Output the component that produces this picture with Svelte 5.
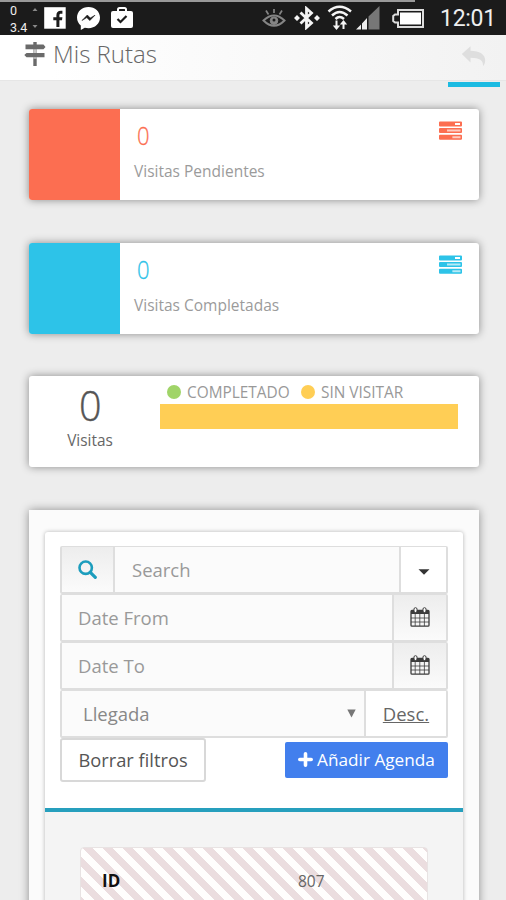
<script>
  const stats = [
    { label: 'Visitas Pendientes', value: 0, tone: 'coral' },
    { label: 'Visitas Completadas', value: 0, tone: 'sky' }
  ];
  const dates = ['Date From', 'Date To'];
</script>

<div class="screen">
  <div class="status">
    <div class="progress"></div>
    <div class="net"><span>0</span><span>3.4</span></div>
    <svg class="arrows" width="6" height="24" viewBox="0 0 6 24"><path d="M3 2 5.500 5H.5zM3 22 5.500 19H.5z" fill="#888" /></svg>
    <svg class="fb" width="22" height="22" viewBox="0 0 22 22">
      <rect width="21.500" height="21.500" x=".2" y=".2" fill="#fff" />
      <path d="M12.400 20v-6.700H9.300v-3h3.100V8.300c0-3 1.500-4.500 4.500-4.500h1.500v3h-1.500c-1.200 0-1.500.6-1.500 1.700v1.800h3l-.4 3h-2.600V20z" fill="#1b1b1b" />
    </svg>
    <svg class="msg" width="25" height="25" viewBox="0 0 25 25">
      <path d="M12.500 1C6 1 1 5.600 1 11.600c0 3.300 1.500 6.100 3.800 8V24l4-2.200c1.200.3 2.400.5 3.700.5 6.500 0 11.500-4.700 11.500-10.700S19 1 12.500 1z" fill="#fff" />
      <path d="m6 14.500 5.300-5.500 3 3 4.700-2.800-5.200 5.400-3-3z" fill="#1b1b1b" stroke="#1b1b1b" stroke-width=".6" />
    </svg>
    <svg class="bag" width="24" height="24" viewBox="0 0 24 24">
      <path d="M8 6V3.500Q8 2 9.500 2h5Q16 2 16 3.500V6" fill="none" stroke="#fff" stroke-width="2" />
      <path d="M3 5h18q2 0 2 2v13q0 2-2 2H3q-2 0-2-2V7q0-2 2-2z" fill="#fff" />
      <path d="m7.500 13 3 3 6-6" fill="none" stroke="#1b1b1b" stroke-width="2.200" />
    </svg>
    <span class="grow"></span>
    <svg class="eye" width="24" height="20" viewBox="0 0 24 20" fill="none" stroke="#858585">
      <path d="M1.500 11.500Q12 1.500 22.500 11.500 12 22 1.500 11.500z" stroke-width="2" />
      <circle cx="12" cy="11.700" r="3.800" fill="#858585" /><circle cx="12" cy="11" r="1.500" fill="#1b1b1b" stroke="none" />
      <path d="M12 4V0M6.500 5.500 4 1.500M17.500 5.500 20 1.500" stroke-width="1.700" />
    </svg>
    <svg class="bt" width="26" height="24" viewBox="0 0 26 24">
      <path d="m6.500 6.500 11 10.500-5 4.500v-19l5 4.500-11 10.500" fill="none" stroke="#f5f5f5" stroke-width="2.800" />
      <path d="M3 9 6 12l-3 3-3-3zM23 9l3 3-3 3-3-3z" fill="#f5f5f5" />
    </svg>
    <svg class="wifi" width="26" height="26" viewBox="0 0 26 26">
      <g fill="none" stroke="#f5f5f5" stroke-width="2.500"><path d="M1.500 6.500Q12.500-3 24 6.500M5 10.500Q12.500 3.500 20.500 10.500M8.500 14q4-4 8.500 0" /></g>
      <path d="M9.500 15.500V22M16.500 24v-6" stroke="#f5f5f5" stroke-width="2" /><path d="M5.800 20.500h7.400L9.500 25zM12.800 19.500h7.400L16.500 15z" fill="#f5f5f5" />
    </svg>
    <svg class="signal" width="24" height="24" viewBox="0 0 24 24">
      <path d="M0 23.500 5 18.500v5zM6 17.500l5-5.500v11.500H6z" fill="#eee" /><path d="M12.500 10.500 23.500 0v23.500h-11z" fill="#777" />
    </svg>
    <svg class="battery" width="32" height="19" viewBox="0 0 32 19">
      <path d="M6 1h25v17H6v-4.500H3L1.200 12V7L3 5.500h3z" fill="none" stroke="#ddd" stroke-width="2" /><path d="M8 3.500h21v12H8z" fill="#fff" />
    </svg>
    <span class="clock">12:01</span>
  </div>

  <header>
    <svg class="sign" width="22" height="24" viewBox="0 0 22 24" fill="#6a6a6a">
      <path d="M9.300 0h3.400v24H9.300z" />
      <path d="M1.500 2.600h18L21.500 5l-2 2.200h-18zM2.500 10.900h18v4.400h-18L.3 13z" />
      <path d="M9.300 7.200h3.400v3.700H9.300zM9.300 15.300h3.400v1.500H9.300z" fill="#c9c9c9" />
    </svg>
    <h1>Mis Rutas</h1>
    <div class="tab">
      <svg width="26" height="21" viewBox="0 0 26 21"><path d="M.8 8 9.500.2v4.600c9 .1 14.700 3.400 14.700 9.700 0 2.400-.9 4.300-2.200 5.800.6-6-3.500-8.300-12.500-8.500v4.700z" fill="#dedede" /></svg>
    </div>
  </header>

  <main>
    {#each stats as s}
      <section class="card stat {s.tone}">
        <div class="block"></div>
        <div class="info"><b>{s.value}</b><span>{s.label}</span></div>
        <svg width="23" height="20" viewBox="0 0 23 20" fill="currentColor">
          <path opacity=".35" d="M8 7.500h14v4H8zM13.500 14H22v4.500h-8.500z" />
          <path fill-rule="evenodd" d="M1 .5h21q1 0 1 1v3q0 1-1 1H1q-1 0-1-1v-3q0-1 1-1zM16 2v2h5V2z" />
          <path fill-rule="evenodd" d="M1 7h21q1 0 1 1v3q0 1-1 1H1q-1 0-1-1V8q0-1 1-1zM8 8.500v2h13.500v-2z" />
          <path fill-rule="evenodd" d="M1 13.800h21q1 0 1 1v3q0 1-1 1H1q-1 0-1-1v-3q0-1 1-1zM13.500 15.300v2h8v-2z" />
        </svg>
      </section>
    {/each}

    <section class="card summary">
      <div class="total"><b>0</b><span>Visitas</span></div>
      <div class="chart">
        <div class="legend">
          <i class="green"></i><span class="done">COMPLETADO</span>
          <i class="yellow"></i><span class="todo">SIN VISITAR</span>
        </div>
        <div class="bar"></div>
      </div>
    </section>

    <section class="panel">
      <div class="inner">
        <div class="form">
          <div class="row">
            <div class="addon find">
              <svg width="19" height="19" viewBox="0 0 19 19" fill="none" stroke="#1c9dbd"><circle cx="7.700" cy="7.700" r="6.200" stroke-width="2.600" /><path d="m12.300 12.300 5 5" stroke-width="3.200" stroke-linecap="round" /></svg>
            </div>
            <div class="field search"><span>Search</span></div>
            <div class="addon drop"><svg width="12" height="6" viewBox="0 0 12 6"><path d="M.5.3h11L6 5.800z" fill="#333" /></svg></div>
          </div>
          {#each dates as d}
            <div class="row">
              <div class="field"><span>{d}</span></div>
              <div class="addon cal">
                <svg width="20" height="20" viewBox="0 0 20 20" fill="none" stroke="#3c3c3c">
                  <rect x="1" y="3.500" width="18" height="15.700" rx="1" stroke-width="1.300" />
                  <path d="M1 3h18v4H1z" fill="#3c3c3c" stroke="none" />
                  <path d="M5.200 7v12M9.800 7v12M14.400 7v12M1 11h18M1 15h18" stroke-width=".8" />
                  <rect x="4" y=".7" width="3" height="4.800" rx="1.400" fill="#fff" /><rect x="13" y=".7" width="3" height="4.800" rx="1.400" fill="#fff" />
                </svg>
              </div>
            </div>
          {/each}
          <div class="row">
            <div class="field select"><span>Llegada</span><svg width="9" height="9" viewBox="0 0 9 9"><path d="M.3.5h8.400L4.500 8.500z" fill="#777" /></svg></div>
            <div class="addon desc"><span>Desc.</span></div>
          </div>
          <div class="actions">
            <button class="clear"><span>Borrar filtros</span></button>
            <button class="add"><svg width="15" height="15" viewBox="0 0 15 15"><path d="M7.500 1.800v11.400M1.800 7.500h11.400" stroke="#fff" stroke-width="3.600" stroke-linecap="round" /></svg><span>Añadir Agenda</span></button>
          </div>
        </div>
        <div class="results">
          <div class="item"><b>ID</b><span>807</span></div>
        </div>
      </div>
    </section>
  </main>
</div>

<style>
  :global(body) { margin: 0; }
  .screen { width: 506px; height: 900px; overflow: hidden; background: #ededed; font-family: 'Open Sans', sans-serif; display: flex; flex-direction: column; }
  .screen * { box-sizing: border-box; }
  svg { display: block; flex: none; }
  span, b, h1 { white-space: nowrap; }
  .status { height: 35px; flex: none; position: relative; background: #1b1b1b; display: flex; align-items: flex-start; padding: 0 9px 0 10px; color: #eee; font-family: Roboto, sans-serif; }
  .progress { position: absolute; left: 0; top: 0; width: 415px; height: 2px; background: #999; }
  .net { width: 22px; display: flex; flex-direction: column; font-size: 12.500px; line-height: 17px; padding-top: 2px; }
  .arrows { margin: 6px 6px 0 0; }
  .fb { margin: 7px 10px 0 0; }
  .msg { margin: 6px 9px 0 0; }
  .bag { margin: 6px 0 0; }
  .grow { flex: 1; }
  .eye { margin: 9px 8px 0 0; }
  .bt { margin: 6px 7px 0 0; }
  .wifi { margin: 5px 3px 0 0; }
  .signal { margin: 6px 12px 0 0; }
  .battery { margin: 9px 16px 0 0; }
  .clock { width: 57px; font-size: 23px; line-height: 35px; padding-top: 1px; letter-spacing: -.3px; }

  header { height: 46px; flex: none; background: linear-gradient(90deg, #fff 10%, #f2f2f2); display: flex; border-bottom: 1px solid #e6e6e6; padding: 0 6px 0 24px; }
  .sign { margin-top: 7px; }
  h1 { flex: 1; margin: 1px 0 0 7px; font-size: 24px; line-height: 36px; font-weight: 300; color: #666; }
  .tab { width: 52px; height: 52px; flex: none; border-bottom: 5px solid #1cbbe2; padding: 11px 0 0 13px; }

  main { padding: 28px 27px 0 29px; display: flex; flex-direction: column; gap: 42.500px; }
  .card { height: 91px; flex: none; display: flex; background: #fff; border-radius: 3px; overflow: hidden; box-shadow: 0 0 8px rgba(0, 0, 0, .42); }
  .block { width: 91px; background: currentColor; }
  .coral { color: #fc6e51; }
  .sky { color: #2dc3e8; }
  .info { flex: 1; display: flex; flex-direction: column; padding: 12px 0 0 14px; }
  .info b { align-self: flex-start; font-size: 25px; line-height: 29px; font-weight: 300; margin-left: 3px; transform: scaleX(.88); transform-origin: left; -webkit-text-stroke: .3px currentColor; }
  .info span { font-size: 15.500px; line-height: 20px; margin-top: 11px; color: #9b9b9b; }
  .stat svg { margin: 12px 17px 0 0; }
  .summary { color: #555; }
  .total { width: 131px; display: flex; flex-direction: column; align-items: center; padding-right: 9px; }
  .total b { font-size: 43px; line-height: 55px; height: 55px; padding-top: 1px; font-weight: 300; transform: scaleX(.92); -webkit-text-stroke: .4px currentColor; }
  .total span { font-size: 15.400px; line-height: 20px; color: #666; }
  .chart { width: 298px; }
  .legend { display: flex; align-items: center; height: 28px; padding: 5px 0 0 7px; color: #999; font-size: 15.400px; }
  .legend i { width: 14px; height: 14px; border-radius: 7px; flex: none; margin: -1px 6px 0 0; }
  .green { background: #a0d468; }
  .yellow { background: #ffce55; }
  .done { width: 114px; }
  .bar { height: 25px; background: #ffce55; }

  .panel { height: 420px; flex: none; background: #fbfbfb; box-shadow: 0 0 9px rgba(0, 0, 0, .4); padding: 22px 16px 0; }
  .inner { height: 398px; background: #fff; border-radius: 3px 3px 0 0; box-shadow: 0 0 4px rgba(0, 0, 0, .28); display: flex; flex-direction: column; }
  .form { height: 280px; flex: none; border-bottom: 4px solid #269fbd; padding: 14px 15px 0; }
  .row { height: 48px; display: flex; border: 2px solid #dedede; border-top-width: 1px; background: #fbfbfb; border-radius: 2px; }
  .field { flex: 1; display: flex; align-items: center; padding-left: 16px; font-size: 18.500px; color: #999; }
  .search { padding-left: 17px; }
  .addon { border-left: 2px solid #dedede; display: flex; align-items: center; justify-content: center; background: linear-gradient(#ededed, #fbfbfb); }
  .find { width: 53px; border-left: 0; border-right: 2px solid #dedede; }
  .drop { width: 47px; background: #fff; padding-top: 6px; }
  .cal { width: 54px; }
  .select { justify-content: space-between; padding: 0 8px 0 21px; color: #888; }
  .desc { width: 82px; background: #fff; font-size: 18.500px; color: #666; text-decoration: underline; text-decoration-thickness: 1px; }
  .actions { display: flex; justify-content: space-between; align-items: flex-start; }
  button { font-family: inherit; display: flex; align-items: center; justify-content: center; padding: 0; }
  .clear { width: 146px; height: 44px; border: 2px solid #d8d8d8; background: #fff; border-radius: 3px; font-size: 18.300px; color: #555; }
  .add { width: 163px; height: 36px; margin-top: 4px; background: #427fed; border: 0; border-radius: 2px; color: #fff; font-size: 17.200px; gap: 4px; }
  .form { height: 280px; }
  .results { flex: 1; background: #f4f4f4; padding: 35px 35px 0; }
  .item { height: 90px; display: flex; border: 1px solid #e8e3e3; border-radius: 4px; padding: 22px 0 0 21px; font-size: 15.500px; line-height: 22px; background: repeating-linear-gradient(45deg, #fffefd 0 7px, #ebdddf 7px 14.140px); }
  .item b { width: 196px; color: #111; font-size: 17px; }
  .item span { color: #666; }
</style>
